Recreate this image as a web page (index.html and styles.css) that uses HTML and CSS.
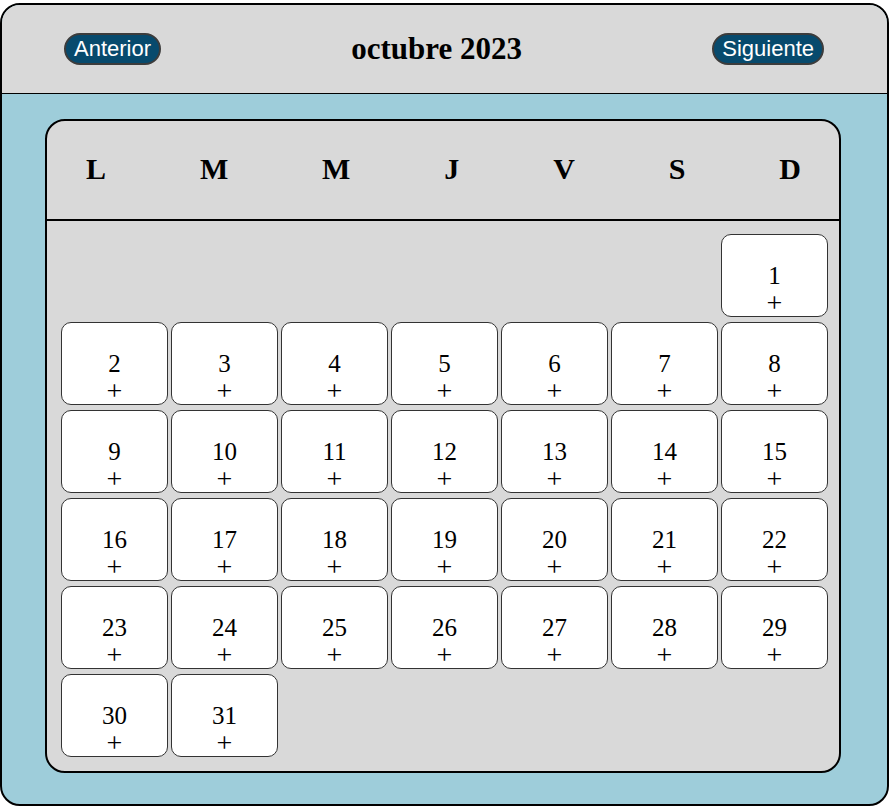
FILE: index.html
```html
<!DOCTYPE html>
<html lang="es">
<head>
<meta charset="utf-8">
<title>Calendario</title>
<link rel="stylesheet" href="styles.css">
</head>
<body>
<div class="app">
  <header class="topbar">
    <button class="nav-btn">Anterior</button>
    <h1 class="month-title">octubre 2023</h1>
    <button class="nav-btn">Siguiente</button>
  </header>
  <main class="stage">
    <section class="calendar">
      <div class="weekdays">
        <span class="wd">L</span>
        <span class="wd">M</span>
        <span class="wd">M</span>
        <span class="wd">J</span>
        <span class="wd">V</span>
        <span class="wd">S</span>
        <span class="wd">D</span>
      </div>
      <div class="days">
        <div class="empty"></div><div class="empty"></div><div class="empty"></div><div class="empty"></div><div class="empty"></div><div class="empty"></div>
        <div class="day"><span class="num">1</span><span class="add">+</span></div>
        <div class="day"><span class="num">2</span><span class="add">+</span></div>
        <div class="day"><span class="num">3</span><span class="add">+</span></div>
        <div class="day"><span class="num">4</span><span class="add">+</span></div>
        <div class="day"><span class="num">5</span><span class="add">+</span></div>
        <div class="day"><span class="num">6</span><span class="add">+</span></div>
        <div class="day"><span class="num">7</span><span class="add">+</span></div>
        <div class="day"><span class="num">8</span><span class="add">+</span></div>
        <div class="day"><span class="num">9</span><span class="add">+</span></div>
        <div class="day"><span class="num">10</span><span class="add">+</span></div>
        <div class="day"><span class="num">11</span><span class="add">+</span></div>
        <div class="day"><span class="num">12</span><span class="add">+</span></div>
        <div class="day"><span class="num">13</span><span class="add">+</span></div>
        <div class="day"><span class="num">14</span><span class="add">+</span></div>
        <div class="day"><span class="num">15</span><span class="add">+</span></div>
        <div class="day"><span class="num">16</span><span class="add">+</span></div>
        <div class="day"><span class="num">17</span><span class="add">+</span></div>
        <div class="day"><span class="num">18</span><span class="add">+</span></div>
        <div class="day"><span class="num">19</span><span class="add">+</span></div>
        <div class="day"><span class="num">20</span><span class="add">+</span></div>
        <div class="day"><span class="num">21</span><span class="add">+</span></div>
        <div class="day"><span class="num">22</span><span class="add">+</span></div>
        <div class="day"><span class="num">23</span><span class="add">+</span></div>
        <div class="day"><span class="num">24</span><span class="add">+</span></div>
        <div class="day"><span class="num">25</span><span class="add">+</span></div>
        <div class="day"><span class="num">26</span><span class="add">+</span></div>
        <div class="day"><span class="num">27</span><span class="add">+</span></div>
        <div class="day"><span class="num">28</span><span class="add">+</span></div>
        <div class="day"><span class="num">29</span><span class="add">+</span></div>
        <div class="day"><span class="num">30</span><span class="add">+</span></div>
        <div class="day"><span class="num">31</span><span class="add">+</span></div>
      </div>
    </section>
  </main>
</div>
</body>
</html>
```

FILE: styles.css
```css
* {
  box-sizing: border-box;
}

body {
  margin: 0;
  padding-top: 3px;
  font-family: "Liberation Serif", "Times New Roman", serif;
  background: #ffffff;
}

.app {
  width: 889px;
  height: 803px;
  border: 2px solid #000;
  border-radius: 20px;
  overflow: hidden;
  display: flex;
  flex-direction: column;
  background: #9ecdda;
}

.topbar {
  height: 89px;
  flex: none;
  background: #d9d9d9;
  border-bottom: 1px solid #000;
  display: flex;
  align-items: center;
  justify-content: space-between;
  padding: 0 63px 1px 62px;
}

.month-title {
  margin: 0;
  font-size: 31px;
  font-weight: bold;
  color: #000;
}

.nav-btn {
  font-family: "Liberation Sans", Arial, sans-serif;
  font-size: 22px;
  line-height: 25px;
  color: #fff;
  background: #074a6d;
  border: 2px solid #3c3c3c;
  border-radius: 16px;
  padding: 1px 8px 2px;
  margin: 0;
}

.stage {
  flex: 1;
  padding: 25px 0 0 43px;
}

.calendar {
  width: 796px;
  height: 654px;
  background: #d9d9d9;
  border: 2px solid #000;
  border-radius: 20px;
  overflow: hidden;
}

.weekdays {
  height: 100px;
  border-bottom: 2px solid #000;
  display: flex;
  align-items: center;
  justify-content: space-between;
  padding: 0 38px 2px 39px;
}

.wd {
  font-size: 30px;
  font-weight: bold;
  color: #000;
}

.days {
  display: grid;
  grid-template-columns: repeat(7, 107px);
  grid-auto-rows: 83px;
  column-gap: 3px;
  row-gap: 5px;
  justify-content: center;
  padding: 13px 0 0 3px;
}

.day {
  background: #fff;
  border: 1px solid #333;
  border-radius: 10px;
  padding-top: 27px;
  display: flex;
  flex-direction: column;
  align-items: center;
  line-height: 27px;
  color: #000;
}

.num {
  font-size: 25px;
}

.add {
  font-size: 28px;
  line-height: 28px;
}
```
